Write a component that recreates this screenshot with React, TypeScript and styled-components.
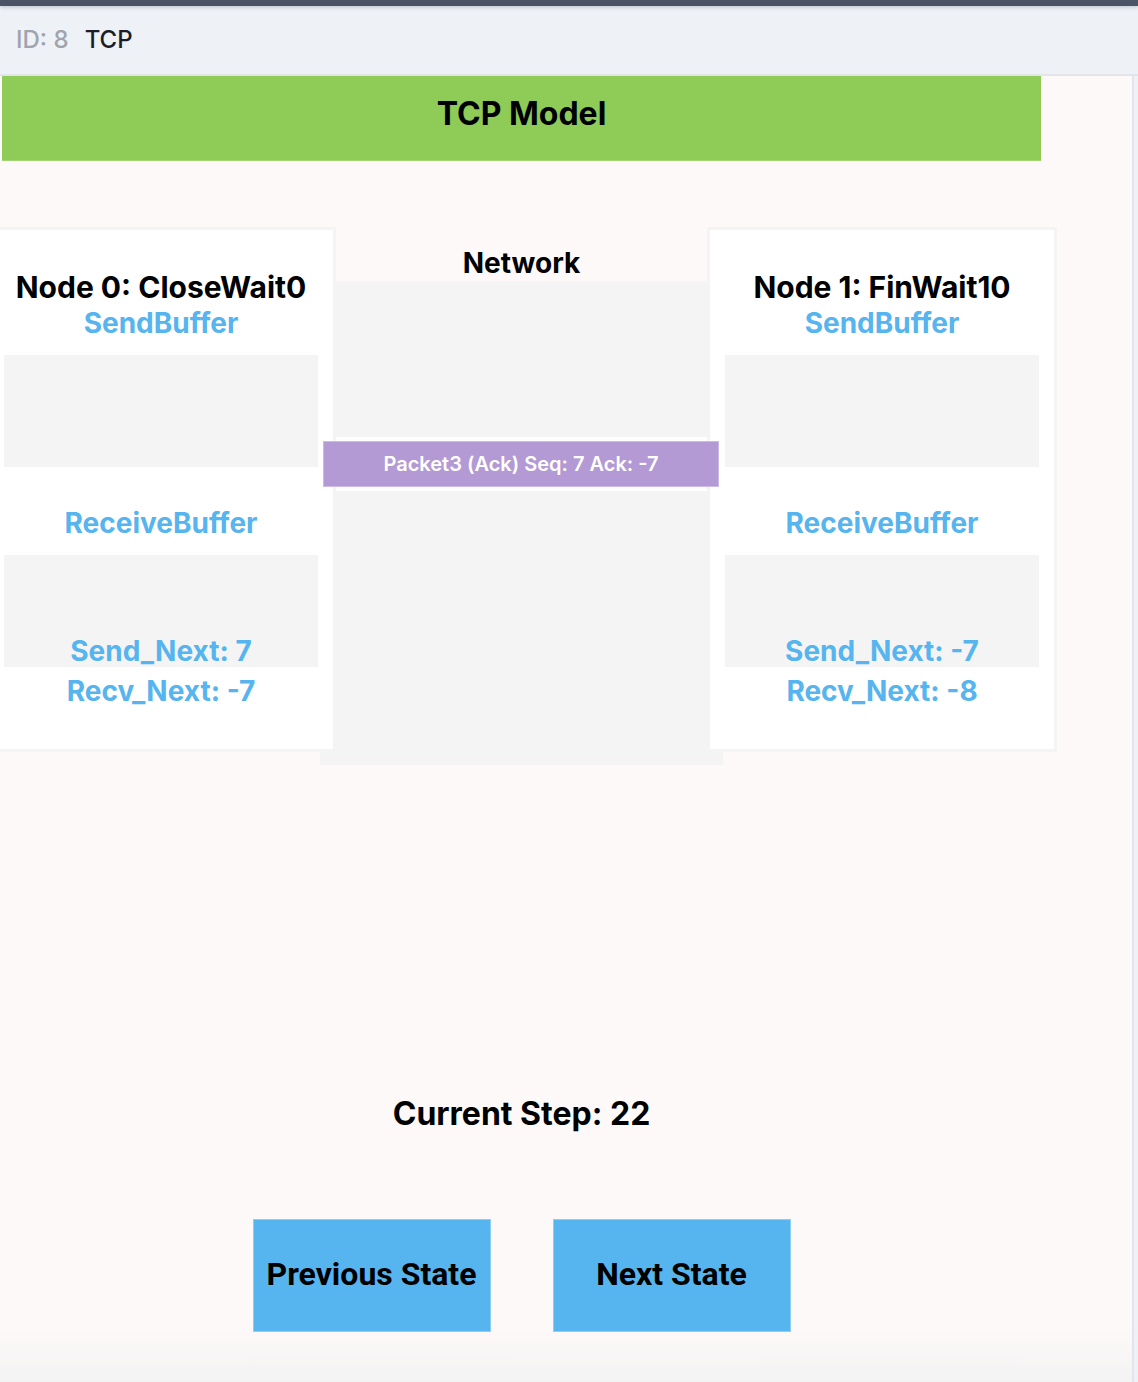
import React from "react";
import styled, { createGlobalStyle } from "styled-components";

const GlobalStyle = createGlobalStyle`
  html, body { margin: 0; padding: 0; }
  body {
    font-family: Inter, "Noto Sans", "Liberation Sans", sans-serif;
    background: #fdf9f8;
    color: #000;
  }
  * { box-sizing: border-box; }
`;

const Page = styled.div`
  min-height: 100vh;
  display: flex;
  flex-direction: column;
`;

const TopStrip = styled.div`
  height: 6px;
  background: #4b5366;
  box-shadow: 0 1px 4px rgba(40, 48, 64, 0.25);
  position: relative;
  z-index: 3;
`;

const Header = styled.header`
  height: 70px;
  display: flex;
  align-items: center;
  gap: 16px;
  padding: 0 0 2px 16px;
  background: #eef1f6;
  border-bottom: 2px solid #e2e5ea;
  font-size: 24px;
  font-weight: 500;
`;

const HeaderId = styled.span`
  color: #9fa4ad;
`;

const HeaderTitle = styled.span`
  color: #1b1e26;
`;

const Body = styled.div`
  flex: 1;
  display: flex;
`;

const Main = styled.main`
  width: 1132px;
  padding-left: 2px;
  background: linear-gradient(
    to bottom,
    #fdf9f8 0,
    #fdf9f8 calc(100% - 56px),
    #f3f3f3 100%
  );
`;

const Rail = styled.div`
  flex: 1;
  border-left: 2px solid #e3e5ea;
  background: #eef1f6;
`;

const Content = styled.div`
  width: 1039px;
  display: flex;
  flex-direction: column;
  align-items: center;
`;

const Banner = styled.div`
  align-self: stretch;
  height: 85px;
  padding-bottom: 10px;
  display: flex;
  align-items: center;
  justify-content: center;
  background: #8fcb57;
  border-bottom: 1px solid #a3d673;
  font-size: 32px;
  font-weight: 700;
`;

const NodesRow = styled.div`
  margin-top: 66px;
  display: flex;
  justify-content: center;
  align-items: flex-start;
`;

const NodeCard = styled.section`
  position: relative;
  z-index: 1;
  flex: 0 0 350px;
  width: 350px;
  height: 525px;
  padding: 39px 15px 0;
  background: #fff;
  border: 3px solid #f4f4f4;
  display: flex;
  flex-direction: column;
  align-items: stretch;
  text-align: center;
`;

const NodeTitle = styled.h2`
  margin: 0;
  font-size: 30px;
  line-height: 36px;
  font-weight: 700;
  white-space: nowrap;
`;

const BufferLabel = styled.h3<{ $gap: number }>`
  margin: ${(p) => p.$gap}px 0 0;
  font-size: 28px;
  line-height: 36px;
  font-weight: 700;
  color: #56b4ee;
`;

const BufferBox = styled.div`
  margin-top: 14px;
  height: 112px;
  background: #f4f4f4;
`;

const Stats = styled.div`
  margin-top: -36px;
  display: flex;
  flex-direction: column;
`;

const Stat = styled.div`
  font-size: 28px;
  line-height: 40px;
  font-weight: 700;
  color: #56b4ee;
`;

const Network = styled.section`
  flex: 0 0 403px;
  width: 403px;
  margin: 0 -16px;
  display: flex;
  flex-direction: column;
`;

const NetworkTitle = styled.h2`
  margin: 0;
  height: 54px;
  display: flex;
  align-items: center;
  justify-content: center;
  padding-top: 18px;
  font-size: 28px;
  font-weight: 700;
`;

const NetworkBody = styled.div`
  height: 484px;
  padding-top: 156px;
  background: #f4f4f4;
`;

const PacketSlot = styled.div`
  padding: 4px 0;
  background: #fff;
`;

const Packet = styled.div`
  position: relative;
  z-index: 2;
  margin: 0 4px 0 3px;
  height: 46px;
  display: flex;
  align-items: center;
  justify-content: center;
  background: #b39ad4;
  border: 1px solid #cbb9e6;
  color: #fff;
  font-size: 20px;
  font-weight: 600;
`;

const StepLabel = styled.h2`
  margin: 331px 0 0;
  font-size: 32px;
  line-height: 36px;
  font-weight: 700;
`;

const Controls = styled.div`
  margin-top: 87px;
  display: flex;
  gap: 62px;
`;

const StateButton = styled.button`
  width: 238px;
  height: 113px;
  padding: 0 0 4px;
  background: #56b4ee;
  border: 1px solid #8fcdf4;
  color: #000;
  font-family: Roboto, "Liberation Sans", sans-serif;
  font-size: 32px;
  font-weight: 700;
  cursor: pointer;
`;

type NodeInfo = {
  title: string;
  sendNext: number;
  recvNext: number;
};

const nodes: NodeInfo[] = [
  { title: "Node 0: CloseWait0", sendNext: 7, recvNext: -7 },
  { title: "Node 1: FinWait10", sendNext: -7, recvNext: -8 },
];

function NodePanel({ node }: { node: NodeInfo }) {
  return (
    <NodeCard>
      <NodeTitle>{node.title}</NodeTitle>
      <BufferLabel $gap={0}>SendBuffer</BufferLabel>
      <BufferBox />
      <BufferLabel $gap={38}>ReceiveBuffer</BufferLabel>
      <BufferBox />
      <Stats>
        <Stat>Send_Next: {node.sendNext}</Stat>
        <Stat>Recv_Next: {node.recvNext}</Stat>
      </Stats>
    </NodeCard>
  );
}

export default function App() {
  return (
    <Page>
      <GlobalStyle />
      <TopStrip />
      <Header>
        <HeaderId>ID: 8</HeaderId>
        <HeaderTitle>TCP</HeaderTitle>
      </Header>
      <Body>
        <Main>
          <Content>
            <Banner>TCP Model</Banner>
            <NodesRow>
              <NodePanel node={nodes[0]} />
              <Network>
                <NetworkTitle>Network</NetworkTitle>
                <NetworkBody>
                  <PacketSlot>
                    <Packet>Packet3 (Ack) Seq: 7 Ack: -7</Packet>
                  </PacketSlot>
                </NetworkBody>
              </Network>
              <NodePanel node={nodes[1]} />
            </NodesRow>
            <StepLabel>Current Step: 22</StepLabel>
            <Controls>
              <StateButton>Previous State</StateButton>
              <StateButton>Next State</StateButton>
            </Controls>
          </Content>
        </Main>
        <Rail />
      </Body>
    </Page>
  );
}
